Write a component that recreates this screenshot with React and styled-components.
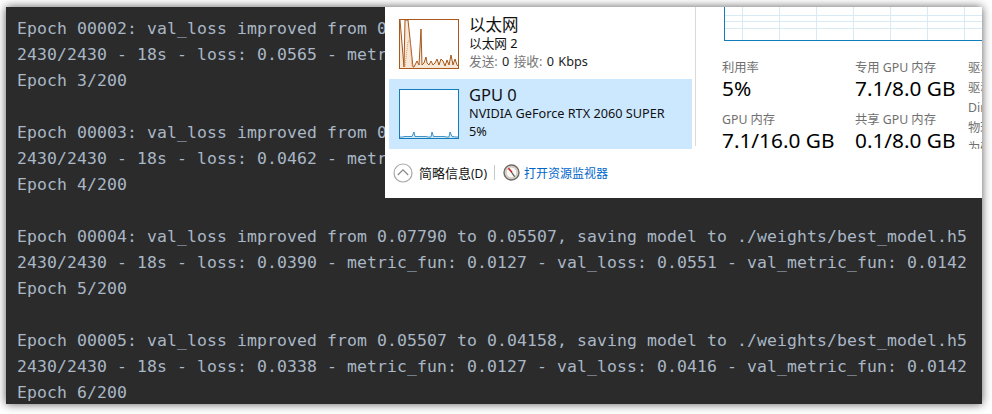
import React from "react";
import styled, { createGlobalStyle } from "styled-components";

const GlobalStyle = createGlobalStyle`
  html, body {
    margin: 0;
    padding: 0;
    background: #fff;
  }
`;

const Page = styled.div`
  width: 992px;
  height: 414px;
  box-sizing: border-box;
  padding: 7px 10px 10px 6px;
  overflow: hidden;
`;

const Shot = styled.div`
  position: relative;
  height: 397px;
  background: #2b2b2b;
  box-shadow: 0 0 9px rgba(0, 0, 0, 0.65);
  overflow: hidden;
`;

const Console = styled.div`
  padding: 9px 0 0 11px;
  font-family: "DejaVu Sans Mono", "Liberation Mono", monospace;
  font-size: 16.44px;
  letter-spacing: 0.105px;
  line-height: 26px;
  color: #a9b7c6;
  white-space: pre;
`;

const Line = styled.div`
  height: 26px;
`;

const Monitor = styled.div`
  position: absolute;
  top: 0;
  right: 0;
  width: 597px;
  height: 191px;
  background: #fff;
  overflow: hidden;
  font-family: "Noto Sans", "Noto Sans CJK SC", sans-serif;
  color: #000;
`;

const Body = styled.div`
  display: flex;
  height: 142px;
`;

const SideList = styled.div`
  width: 307px;
  flex: none;
  padding-left: 4px;
  box-sizing: border-box;
  margin-right: 3px;
`;

const Device = styled.div`
  display: flex;
  height: ${(p) => (p.$selected ? "70px" : "72px")};
  box-sizing: border-box;
  padding: ${(p) => (p.$selected ? "10px" : "12px")} 0 0 10px;
  background: ${(p) => (p.$selected ? "#cce8ff" : "transparent")};
`;

const Thumb = styled.svg`
  width: 60px;
  height: 50px;
  flex: none;
  display: block;
`;

const DeviceText = styled.div`
  margin-left: 10px;
  margin-top: -4px;
`;

const DeviceName = styled.div`
  font-size: 16.5px;
  line-height: 19px;
  color: #111;
`;

const DeviceSub = styled.div`
  font-size: 12.7px;
  line-height: 18px;
  word-spacing: ${(p) => (p.$muted ? "1px" : "0")};
  color: ${(p) => (p.$muted ? "#777" : "#111")};
`;

const Num = styled.span`
  color: #222;
`;

const Divider = styled.div`
  width: 1px;
  height: 139px;
  background: #d9d9d9;
  flex: none;
`;

const Detail = styled.div`
  flex: 1;
  min-width: 0;
`;

const ChartArea = styled.div`
  height: 34px;
  margin-left: 28px;
  box-sizing: border-box;
  border-left: 1px solid #117dbb;
  border-bottom: 1px solid #117dbb;
  background-color: #fff;
  background-image:
    repeating-linear-gradient(to right, transparent 0 17px, #d9eaf4 17px 18px, transparent 18px 37px),
    repeating-linear-gradient(to bottom, transparent 0 1.5px, #d9eaf4 1.5px 2.5px, transparent 2.5px 6.5px);
`;

const Stats = styled.div`
  display: grid;
  grid-template-columns: 133px 113px 60px;
  margin: 18px 0 0 26px;
  overflow: hidden;
  height: 90px;
`;

const StatCol = styled.div`
  display: flex;
  flex-direction: column;
`;

const StatLabel = styled.div`
  font-size: 12.3px;
  line-height: 17px;
  color: #707070;
`;

const StatValue = styled.div`
  font-size: 20.8px;
  line-height: 27px;
  margin: -1px 0 9px;
  white-space: nowrap;
`;

const DriverCol = styled.div`
  font-size: 12.3px;
  line-height: 20px;
  margin-top: -1px;
  color: #707070;
  white-space: nowrap;
`;

const Footer = styled.div`
  display: flex;
  align-items: center;
  height: 47px;
  padding: 0 0 0 8px;
  box-sizing: border-box;
`;

const FooterIcon = styled.svg`
  width: ${(p) => p.$size}px;
  height: ${(p) => p.$size}px;
  flex: none;
`;

const Brief = styled.span`
  font-size: 13px;
  margin-left: 6px;
  color: #111;
`;

const Hint = styled.span`
  font-size: 12px;
`;

const FooterSep = styled.div`
  width: 1px;
  height: 15px;
  background: #c8c8c8;
  margin: 0 8px 0 7px;
`;

const MonitorLink = styled.span`
  font-size: 12px;
  color: #0066cc;
  margin-left: 4px;
`;

const CONSOLE_LINES = [
  "Epoch 00002: val_loss improved from 0.10214 to 0.09026, saving model to ./weights/best_model.h5",
  "2430/2430 - 18s - loss: 0.0565 - metric_fun: 0.0127 - val_loss: 0.0903 - val_metric_fun: 0.0142",
  "Epoch 3/200",
  "",
  "Epoch 00003: val_loss improved from 0.09026 to 0.07790, saving model to ./weights/best_model.h5",
  "2430/2430 - 18s - loss: 0.0462 - metric_fun: 0.0127 - val_loss: 0.0779 - val_metric_fun: 0.0142",
  "Epoch 4/200",
  "",
  "Epoch 00004: val_loss improved from 0.07790 to 0.05507, saving model to ./weights/best_model.h5",
  "2430/2430 - 18s - loss: 0.0390 - metric_fun: 0.0127 - val_loss: 0.0551 - val_metric_fun: 0.0142",
  "Epoch 5/200",
  "",
  "Epoch 00005: val_loss improved from 0.05507 to 0.04158, saving model to ./weights/best_model.h5",
  "2430/2430 - 18s - loss: 0.0338 - metric_fun: 0.0127 - val_loss: 0.0416 - val_metric_fun: 0.0142",
  "Epoch 6/200",
];

const NET_LINE =
  "M1 1L5 48L6 1L9 1L14 48L15 48L18 42L20 46L22 10L23 46L25 44L27 38L28 44L30 46L32 42L34 46L36 44L38 40L40 46L42 40L44 42L46 47L48 41L50 46L52 36L54 46L56 40L58 46L59 47";
const GPU_LINE =
  "M1 48L4 48L5 47.5L13 47.5L15 43L16 47.5L27 47.5L29 48L32 48L33 43L34.5 47.5L45 47.5L48 48L50 48L51 43L53 47.5L57 48L59 48";

const NetGraph = () => (
  <Thumb viewBox="0 0 60 50">
    <rect x="0.5" y="0.5" width="59" height="49" fill="#fff" />
    <path d={`${NET_LINE}V49H1Z`} fill="#f7e8da" />
    <path d={NET_LINE} fill="none" stroke="#a7581a" strokeWidth="1" />
    <path d="M6 48L9 22L11 22L13 48" fill="none" stroke="#dc9a66" strokeWidth="1" strokeDasharray="1 1" />
    <rect x="0.5" y="0.5" width="59" height="49" fill="none" stroke="#a7581a" />
  </Thumb>
);

const GpuGraph = () => (
  <Thumb viewBox="0 0 60 50">
    <rect x="0.5" y="0.5" width="59" height="49" fill="#fff" />
    <path d={`${GPU_LINE}V49H1Z`} fill="#d4e7f3" />
    <path d={GPU_LINE} fill="none" stroke="#117dbb" strokeWidth="0.8" />
    <rect x="0.5" y="0.5" width="59" height="49" fill="none" stroke="#117dbb" />
  </Thumb>
);

const CollapseIcon = () => (
  <FooterIcon $size={20} viewBox="0 0 20 20">
    <circle cx="10" cy="10" r="9" fill="#fff" stroke="#a8a8a8" strokeWidth="1.2" />
    <path d="M4.8 12L10 6.8L15.2 12" fill="none" stroke="#8a8a8a" strokeWidth="1.3" />
  </FooterIcon>
);

const GaugeIcon = () => (
  <FooterIcon $size={17} viewBox="0 0 17 17">
    <circle cx="8.5" cy="8.5" r="7.5" fill="#d9d5cc" stroke="#6f6b64" strokeWidth="1.4" />
    <circle cx="8.5" cy="8.5" r="5.4" fill="#fbf9f5" stroke="#b5b1a8" strokeWidth="0.6" />
    <path d="M5.4 4.2L8.9 8.2" stroke="#c9252b" strokeWidth="1.6" />
    <path d="M8.4 8L11.6 12.6" stroke="#54504a" strokeWidth="1.2" />
  </FooterIcon>
);

const App = () => {
  return (
    <Page>
      <GlobalStyle />
      <Shot>
        <Console>
          {CONSOLE_LINES.map((text, i) => (
            <Line key={i}>{text}</Line>
          ))}
        </Console>
        <Monitor>
          <Body>
            <SideList>
              <Device>
                <NetGraph />
                <DeviceText>
                  <DeviceName>以太网</DeviceName>
                  <DeviceSub>以太网 2</DeviceSub>
                  <DeviceSub $muted>
                    发送: <Num>0</Num> 接收: <Num>0 Kbps</Num>
                  </DeviceSub>
                </DeviceText>
              </Device>
              <Device $selected>
                <GpuGraph />
                <DeviceText>
                  <DeviceName>GPU 0</DeviceName>
                  <DeviceSub>NVIDIA GeForce RTX 2060 SUPER</DeviceSub>
                  <DeviceSub>5%</DeviceSub>
                </DeviceText>
              </Device>
            </SideList>
            <Divider />
            <Detail>
              <ChartArea />
              <Stats>
                <StatCol>
                  <StatLabel>利用率</StatLabel>
                  <StatValue>5%</StatValue>
                  <StatLabel>GPU 内存</StatLabel>
                  <StatValue>7.1/16.0 GB</StatValue>
                </StatCol>
                <StatCol>
                  <StatLabel>专用 GPU 内存</StatLabel>
                  <StatValue>7.1/8.0 GB</StatValue>
                  <StatLabel>共享 GPU 内存</StatLabel>
                  <StatValue>0.1/8.0 GB</StatValue>
                </StatCol>
                <DriverCol>
                  <div>驱动程序版本</div>
                  <div>驱动程序日期</div>
                  <div>DirectX 版本</div>
                  <div>物理位置</div>
                  <div>为硬件保留的内存</div>
                </DriverCol>
              </Stats>
            </Detail>
          </Body>
          <Footer>
            <CollapseIcon />
            <Brief>
              简略信息<Hint>(D)</Hint>
            </Brief>
            <FooterSep />
            <GaugeIcon />
            <MonitorLink>打开资源监视器</MonitorLink>
          </Footer>
        </Monitor>
      </Shot>
    </Page>
  );
};

export default App;
